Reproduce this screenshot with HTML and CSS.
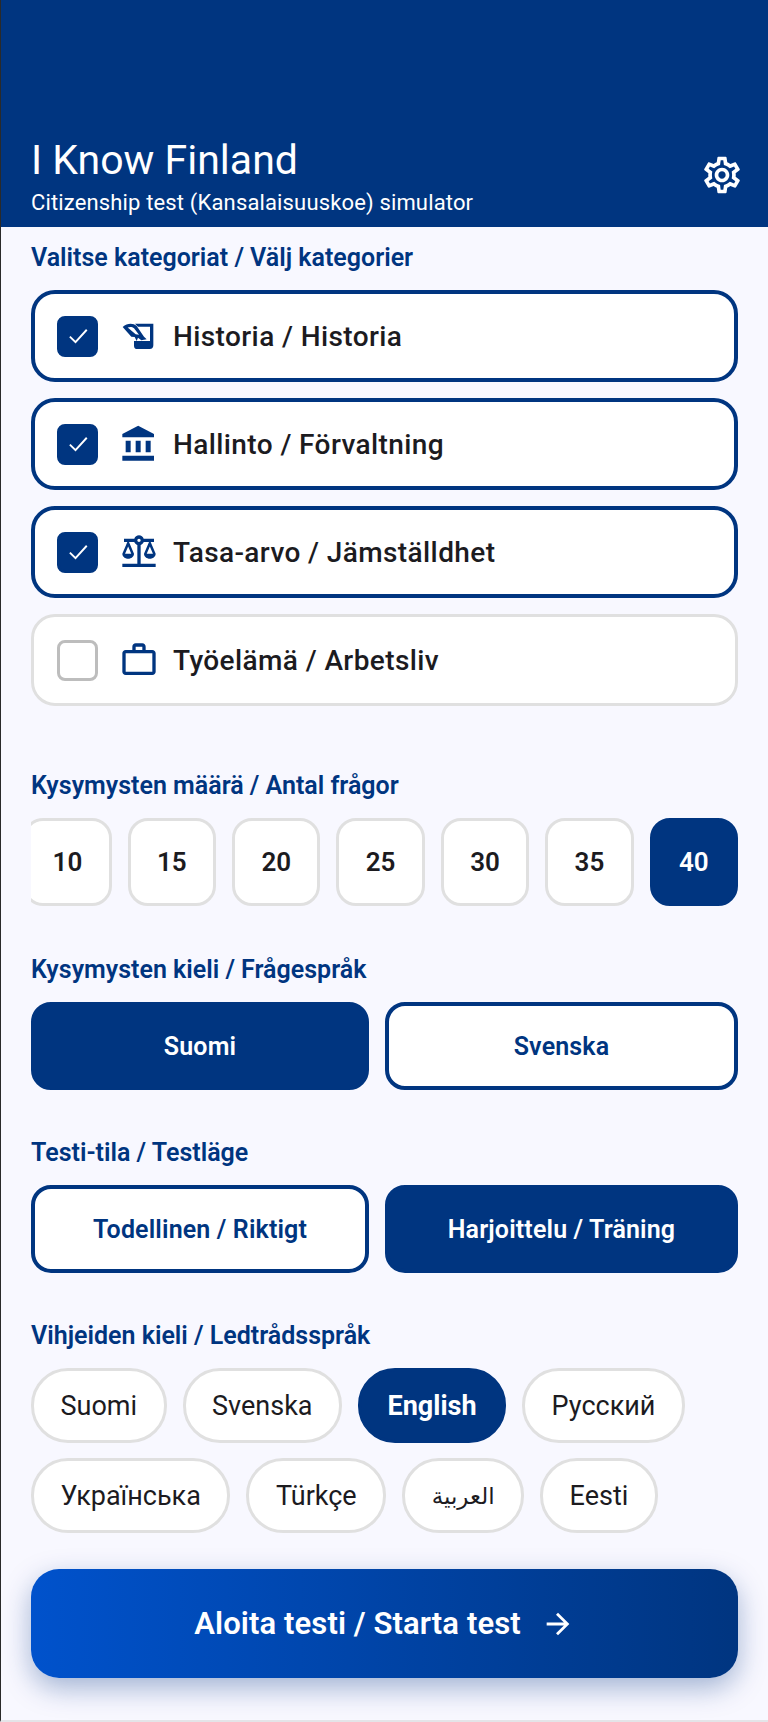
FILE: index.html
```html
<!DOCTYPE html>
<html lang="fi">
<head>
<meta charset="utf-8">
<title>I Know Finland</title>
<link rel="stylesheet" href="styles.css">
</head>
<body>
<div class="app">
  <header class="top">
    <div class="top-text">
      <h1 class="title">I Know Finland</h1>
      <p class="subtitle">Citizenship test (Kansalaisuuskoe) simulator</p>
    </div>
    <svg class="gear" viewBox="0 0 24 24"><path d="M19.43 12.98c.04-.32.07-.64.07-.98 0-.34-.03-.66-.07-.98l2.11-1.65c.19-.15.24-.42.12-.64l-2-3.46c-.09-.16-.26-.25-.44-.25-.06 0-.12.01-.17.03l-2.49 1c-.52-.4-1.08-.73-1.69-.98l-.38-2.65C14.46 2.18 14.25 2 14 2h-4c-.25 0-.46.18-.49.42l-.38 2.65c-.61.25-1.17.59-1.69.98l-2.49-1c-.06-.02-.12-.03-.18-.03-.17 0-.34.09-.43.25l-2 3.46c-.13.22-.07.49.12.64l2.11 1.65c-.04.32-.07.65-.07.98 0 .33.03.66.07.98l-2.11 1.65c-.19.15-.24.42-.12.64l2 3.46c.09.16.26.25.44.25.06 0 .12-.01.17-.03l2.49-1c.52.4 1.08.73 1.69.98l.38 2.65c.03.24.24.42.49.42h4c.25 0 .46-.18.49-.42l.38-2.65c.61-.25 1.17-.59 1.69-.98l2.49 1c.06.02.12.03.18.03.17 0 .34-.09.43-.25l2-3.46c.12-.22.07-.49-.12-.64l-2.11-1.65zm-1.98-1.71c.04.31.05.52.05.73 0 .21-.02.43-.05.73l-.14 1.13.89.7 1.08.84-.7 1.21-1.27-.51-1.04-.42-.9.68c-.43.32-.84.56-1.25.73l-1.06.43-.16 1.13-.2 1.35h-1.4l-.19-1.35-.16-1.13-1.06-.43c-.43-.18-.83-.41-1.23-.71l-.91-.7-1.06.43-1.27.51-.7-1.21 1.08-.84.89-.7-.14-1.13c-.03-.31-.05-.54-.05-.74s.02-.43.05-.73l.14-1.13-.89-.7-1.08-.84.7-1.21 1.27.51 1.04.42.9-.68c.43-.32.84-.56 1.25-.73l1.06-.43.16-1.13.2-1.35h1.39l.19 1.35.16 1.13 1.06.43c.43.18.83.41 1.23.71l.91.7 1.06-.43 1.27-.51.7 1.21-1.07.85-.89.7.14 1.13zM12 8c-2.21 0-4 1.79-4 4s1.79 4 4 4 4-1.79 4-4-1.79-4-4-4zm0 6c-1.1 0-2-.9-2-2s.9-2 2-2 2 .9 2 2-.9 2-2 2z"/></svg>
  </header>
  <main class="content">
    <section class="sec sec-cats">
      <h2 class="label">Valitse kategoriat / Välj kategorier</h2>
      <div class="cats">
        <div class="cat on">
          <span class="box"><svg viewBox="0 0 24 24"><path d="M5.5 12.5l4.5 4.5 9-10"/></svg></span>
          <svg class="ico" viewBox="0 0 24 24">
            <path d="M9.6 4.6H20.6V17.6a2.2 2.2 0 0 1-2.2 2.2H11a2 2 0 0 1-2-2V15H18.6V6.4H11.4Z"/>
            <path fill-rule="evenodd" d="M2.2 6.6C5 4.2 8.4 4.2 10.6 6L15 12.4 16.6 14 13.4 14.6 11.4 13 10.6 15 9.4 12.6 7.4 12.4ZM5.2 6.9C6.6 6.3 8 6.5 9 7.4L12 11.3 10 11Z"/>
          </svg>
          <span class="cat-text">Historia / Historia</span>
        </div>
        <div class="cat on">
          <span class="box"><svg viewBox="0 0 24 24"><path d="M5.5 12.5l4.5 4.5 9-10"/></svg></span>
          <svg class="ico" viewBox="0 0 24 24"><path d="M4 10v7h3v-7H4zm6 0v7h3v-7h-3zM2 22h19v-3H2v3zm14-12v7h3v-7h-3zm-4.5-9L2 6v2h19V6l-9.5-5z"/></svg>
          <span class="cat-text">Hallinto / Förvaltning</span>
        </div>
        <div class="cat on">
          <span class="box"><svg viewBox="0 0 24 24"><path d="M5.5 12.5l4.5 4.5 9-10"/></svg></span>
          <svg class="ico" viewBox="0 0 24 24"><path d="M13 7.83c.85-.3 1.53-.98 1.83-1.83H18l-3 7c0 1.66 1.57 3 3.5 3s3.5-1.34 3.5-3l-3-7h2V4h-6.17c-.41-1.17-1.52-2-2.83-2s-2.42.83-2.83 2H3v2h2l-3 7c0 1.66 1.57 3 3.5 3S9 14.66 9 13L6 6h3.17c.3.85.98 1.53 1.83 1.83V19H2v2h20v-2h-9V7.83zM20.37 13h-3.74l1.87-4.36L20.37 13zm-13 0H3.63L5.5 8.64 7.37 13zM12 6c-.55 0-1-.45-1-1s.45-1 1-1 1 .45 1 1-.45 1-1 1z"/></svg>
          <span class="cat-text">Tasa-arvo / Jämställdhet</span>
        </div>
        <div class="cat">
          <span class="box"></span>
          <svg class="ico" viewBox="0 0 24 24"><path d="M14 6V4h-4v2h4zM4 8v11h16V8H4zm16-2c1.11 0 2 .89 2 2v11c0 1.11-.89 2-2 2H4c-1.11 0-2-.89-2-2l.01-11c0-1.11.88-2 1.99-2h4V4c0-1.11.89-2 2-2h4c1.11 0 2 .89 2 2v2h4z"/></svg>
          <span class="cat-text">Työelämä / Arbetsliv</span>
        </div>
      </div>
    </section>
    <section class="sec sec-count">
      <h2 class="label">Kysymysten määrä / Antal frågor</h2>
      <div class="counts">
        <span class="count">10</span><span class="count">15</span><span class="count">20</span><span class="count">25</span><span class="count">30</span><span class="count">35</span><span class="count sel">40</span>
      </div>
    </section>
    <section class="sec sec-qlang">
      <h2 class="label">Kysymysten kieli / Frågespråk</h2>
      <div class="pair">
        <span class="opt sel">Suomi</span>
        <span class="opt">Svenska</span>
      </div>
    </section>
    <section class="sec sec-mode">
      <h2 class="label">Testi-tila / Testläge</h2>
      <div class="pair">
        <span class="opt">Todellinen / Riktigt</span>
        <span class="opt sel">Harjoittelu / Träning</span>
      </div>
    </section>
    <section class="sec sec-hint">
      <h2 class="label">Vihjeiden kieli / Ledtrådsspråk</h2>
      <div class="chips">
        <span class="chip">Suomi</span>
        <span class="chip">Svenska</span>
        <span class="chip sel">English</span>
        <span class="chip">Русский</span>
        <span class="chip">Українська</span>
        <span class="chip">Türkçe</span>
        <span class="chip arabic" lang="ar">العربية</span>
        <span class="chip">Eesti</span>
      </div>
    </section>
    <div class="cta">
      <span>Aloita testi / Starta test</span>
      <svg class="arrow" viewBox="0 0 24 24"><path d="M12 4l-1.41 1.41L16.17 11H4v2h12.17l-5.58 5.59L12 20l8-8z"/></svg>
    </div>
  </main>
</div>
</body>
</html>
```

FILE: styles.css
```css
* { box-sizing: border-box; }
html, body { margin: 0; padding: 0; }
body {
  width: 768px;
  height: 1722px;
  overflow: hidden;
  background: #f8f8ff;
  font-family: Roboto, "Noto Sans", sans-serif;
}
.app {
  height: 1722px;
  border-left: 1px solid #2a2a2a;
  border-bottom: 2px solid #e4e4e8;
}
.top {
  height: 227px;
  background: #003580;
  color: #fff;
  display: flex;
  align-items: flex-end;
  justify-content: space-between;
  padding: 0 24px 9px 30px;
}
.title {
  margin: 0;
  font-size: 41px;
  line-height: 48px;
  font-weight: 400;
}
.subtitle {
  margin: 4px 0 0;
  font-size: 22px;
  line-height: 30px;
  font-weight: 400;
  letter-spacing: 0.15px;
}
.gear { width: 44px; height: 44px; fill: #fff; margin-bottom: 21px; }
.content { padding: 16px 30px 0 30px; }
.label {
  margin: 0;
  font-size: 25px;
  line-height: 30px;
  font-weight: 600;
  color: #003580;
}
.cats { display: flex; flex-direction: column; gap: 16px; margin-top: 17px; }
.cat {
  height: 92px;
  display: flex;
  align-items: center;
  background: #fff;
  border: 3px solid #e0e0e0;
  border-radius: 24px;
  padding-left: 23px;
}
.cat.on { border: 4px solid #003580; padding-left: 22px; }
.box {
  width: 41px;
  height: 41px;
  border-radius: 8px;
  border: 3px solid #bdbdbd;
  background: #fff;
  display: flex;
  align-items: center;
  justify-content: center;
}
.cat.on .box { background: #003580; border-color: #003580; }
.box svg { flex: none; width: 30px; height: 30px; fill: none; stroke: #fff; stroke-width: 1.5; }
.ico { width: 40px; height: 40px; fill: #003580; margin-left: 21px; }
.cat-text {
  margin-left: 14px;
  font-size: 28px;
  font-weight: 500;
  letter-spacing: 0.4px;
  color: #1c1b1f;
}
.sec-count { margin-top: 65px; }
.counts {
  display: flex;
  justify-content: flex-end;
  gap: 16px;
  margin-top: 17px;
  overflow: hidden;
}
.count {
  flex: 0 0 88.4px;
  height: 88px;
  display: flex;
  align-items: center;
  justify-content: center;
  background: #fff;
  border: 3px solid #e0e0e0;
  border-radius: 20px;
  font-size: 26px;
  font-weight: 600;
  color: #1c1b1f;
}
.count.sel { background: #003580; border-color: #003580; color: #fff; }
.sec-qlang { margin-top: 49px; }
.sec-mode { margin-top: 48px; }
.sec-hint { margin-top: 48px; }
.pair {
  display: grid;
  grid-template-columns: 338fr 353fr;
  gap: 16px;
  margin-top: 17px;
}
.opt {
  height: 88px;
  display: flex;
  align-items: center;
  justify-content: center;
  background: #fff;
  border: 4px solid #003580;
  border-radius: 20px;
  font-size: 25px;
  font-weight: 600;
  letter-spacing: 0.15px;
  color: #003580;
}
.opt.sel { background: #003580; color: #fff; }
.chips {
  display: flex;
  flex-wrap: wrap;
  gap: 15px 16px;
  margin-top: 17px;
}
.chip {
  height: 75px;
  display: flex;
  align-items: center;
  padding: 0 26.5px;
  background: #fff;
  border: 3px solid #e0e0e0;
  border-radius: 37px;
  font-size: 27px;
  color: #1c1b1f;
}
.chip.sel { background: #003580; border-color: #003580; color: #fff; font-weight: 700; }
.arabic { font-family: "DejaVu Sans", sans-serif; font-size: 23px; }
.cta {
  margin-top: 36px;
  height: 109px;
  display: flex;
  align-items: center;
  justify-content: center;
  gap: 20px;
  color: #fff;
  font-size: 31px;
  font-weight: 600;
  letter-spacing: 0.1px;
  border-radius: 28px;
  background: linear-gradient(90deg, #0052cc, #003580);
  box-shadow: 0 10px 28px rgba(0, 53, 128, 0.35);
}
.arrow { width: 34px; height: 34px; fill: #fff; }
```
